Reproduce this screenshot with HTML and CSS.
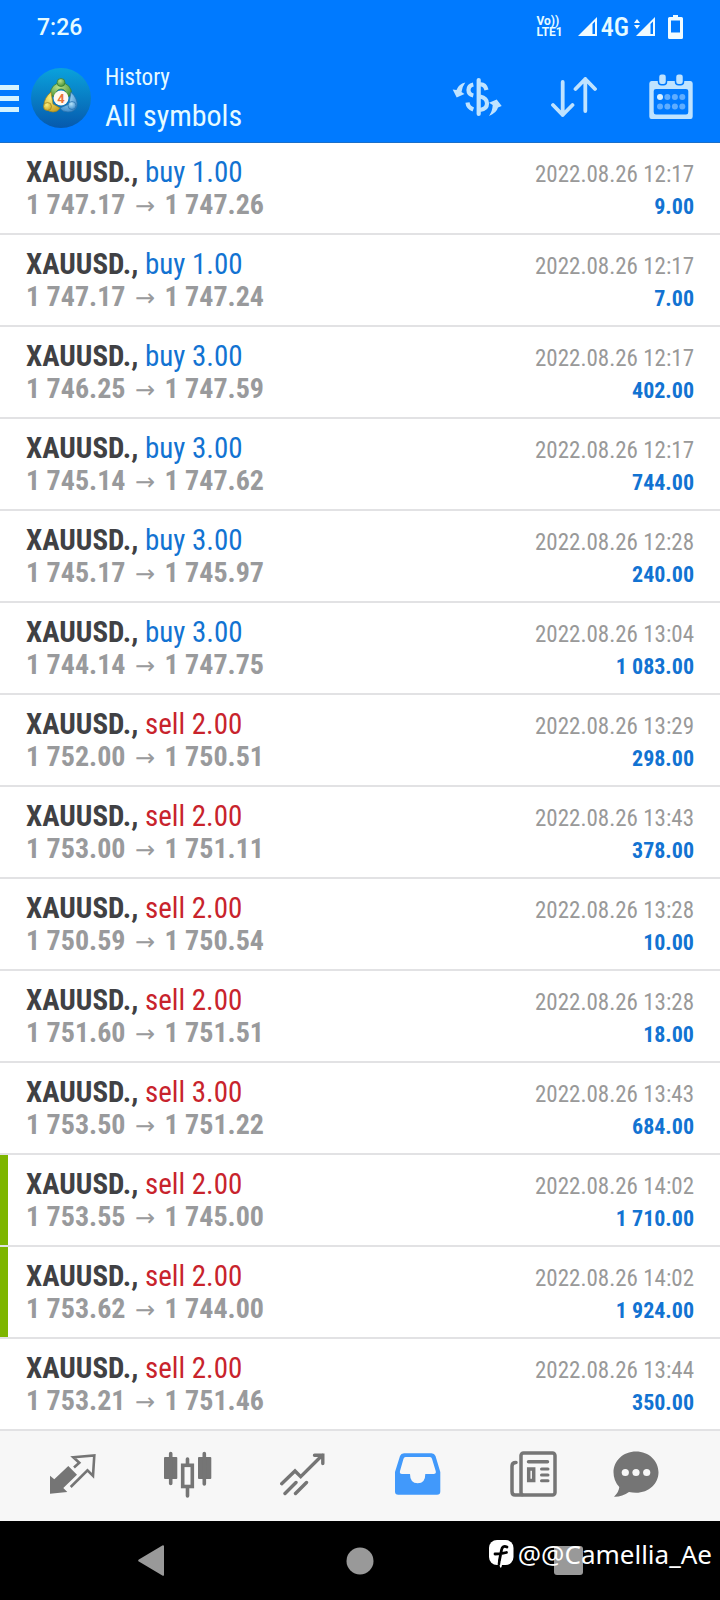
FILE: index.html
```html
<!DOCTYPE html>
<html lang="en">
<head>
<meta charset="utf-8">
<meta name="viewport" content="width=device-width, initial-scale=1">
<title>History</title>
<link rel="stylesheet" href="styles.css">
</head>
<body>
<header class="top">
  <div class="status">
    <span class="clock">7:26</span>
    <span class="volte"><span>Vo))</span><span>LTE1</span></span>
    <svg class="signal" width="20" height="20" viewBox="0 0 20 20"><path d="M0 19 19 0V19Z" fill="#f0fbff"/><path d="M14.500 7V17H17V4.500Z" fill="#007aff"/></svg>
    <span class="net">4G</span>
    <svg class="signal2" width="22" height="20" viewBox="0 0 22 20"><path d="M2 19 21 0V19Z" fill="#f0fbff"/><path d="M16.500 7V17H19V4.500Z" fill="#007aff"/><path d="M0 6 3 2 6 6ZM0 8H6L3 12Z" fill="#f0fbff"/></svg>
    <svg class="battery" width="15" height="24" viewBox="0 0 15 24"><path d="M5 0H10V2H13.500Q15 2 15 3.500V22.500Q15 24 13.500 24H1.500Q0 24 0 22.500V3.500Q0 2 1.500 2H5Z" fill="#f0fbff"/><path d="M3 5.500H12V17.500H3Z" fill="#007aff"/></svg>
  </div>
  <div class="appbar">
    <button class="menu" aria-label="Menu"><i></i><i></i><i></i></button>
    <svg class="logo" width="60" height="60" viewBox="0 0 60 60" role="img" aria-label="App logo">
      <defs>
        <linearGradient id="sky" x1="0" y1="0" x2="0" y2="1"><stop offset="0" stop-color="#0aa2dc"/><stop offset="1" stop-color="#0659ad"/></linearGradient>
        <radialGradient id="gr" cx=".4" cy=".3" r=".8"><stop offset="0" stop-color="#b9e08a"/><stop offset="1" stop-color="#3c8a2c"/></radialGradient>
        <radialGradient id="ye" cx=".4" cy=".3" r=".8"><stop offset="0" stop-color="#fbf07c"/><stop offset="1" stop-color="#c49a1c"/></radialGradient>
        <radialGradient id="bl" cx=".4" cy=".3" r=".8"><stop offset="0" stop-color="#b5e4fa"/><stop offset="1" stop-color="#2f82c8"/></radialGradient>
      </defs>
      <circle cx="30" cy="30" r="30" fill="url(#sky)"/>
      <path d="M19 27Q20 15 30 15T41 27L36 29Q35 21 30 21T24 29Z" fill="url(#gr)" stroke="#2d7a35" stroke-width=".7"/>
      <path d="M20 24Q13 30 13 37Q14 43 22 44Q27 44 29 40L22 36Z" fill="url(#ye)" stroke="#9c8420" stroke-width=".7"/>
      <path d="M40 24Q47 31 46 38Q44 44 37 44Q31 44 29 40L38 36Z" fill="url(#bl)" stroke="#2870ab" stroke-width=".7"/>
      <circle cx="30" cy="14.500" r="4" fill="url(#gr)" stroke="#2d7a35" stroke-width=".7"/>
      <circle cx="16.500" cy="38.500" r="4" fill="url(#ye)" stroke="#9c8420" stroke-width=".7"/>
      <circle cx="41" cy="37.500" r="4" fill="url(#bl)" stroke="#2870ab" stroke-width=".7"/>
      <circle cx="30" cy="30" r="7.500" fill="#fff8f0"/>
      <text x="30" y="34.500" text-anchor="middle" class="logo-num">4</text>
    </svg>
    <div class="titles">
      <span class="sub">History</span>
      <h1>All symbols</h1>
    </div>
    <button class="action" aria-label="Currency">
      <svg width="50" height="42" viewBox="0 0 50 42" fill="none" stroke="#bfe3ff" stroke-width="4.200">
        <path d="M.7 13.500 4.500 14Q6.500 8 13.300 6.500Q10 11 9.500 16L12.500 18 4.700 21.500ZM49.700 30 44.700 23.500 37 26.700 40.700 29Q40.500 35 37 40Q44.500 37 46 31.500Z" fill="#bfe3ff" stroke="none"/>
        <path d="M26.700 4V38" stroke-linecap="round"/>
        <path d="M21.300 8.500Q16.500 9.500 16.500 14T21.300 19.500M15.500 26.500Q16 31.500 21.300 33.500M28 8.500Q33 8 34.500 14M28 20.500Q35 22 35 27.500T28 34"/>
      </svg>
    </button>
    <button class="action" aria-label="Sort">
      <svg width="46" height="42" viewBox="0 0 46 42" fill="none" stroke="#bfe3ff" stroke-width="3.800" stroke-linecap="round" stroke-linejoin="round"><path d="M11.700 6V39M2 29 11.700 39 21.500 29M34.300 35V3M24.500 13 34.300 3 44 13"/></svg>
    </button>
    <button class="action" aria-label="Date range">
      <svg width="46" height="48" viewBox="0 0 46 48">
        <path fill="#bfe3ff" fill-rule="evenodd" d="M3.500 8H42.500Q44.700 8 44.700 10.500V43.500Q44.700 46 42.500 46H3.500Q1.300 46 1.300 43.500V10.500Q1.300 8 3.500 8ZM8 16Q5.700 16 5.700 18V39Q5.700 41.500 8 41.500H38Q40.300 41.500 40.300 39V18Q40.300 16 38 16Z"/>
        <g fill="#bfe3ff" stroke="#007aff" stroke-width="1.500"><rect x="10.500" y=".8" width="8" height="11" rx="3"/><rect x="27.500" y=".8" width="8" height="11" rx="3"/></g>
        <circle cx="12" cy="24" r="3" fill="#d9f0ff"/>
        <g fill="#5fadff"><circle cx="19.400" cy="24" r="3"/><circle cx="26.900" cy="24" r="3"/><circle cx="34.300" cy="24" r="3"/><circle cx="12" cy="33.500" r="3"/><circle cx="19.400" cy="33.500" r="3"/><circle cx="26.900" cy="33.500" r="3"/><circle cx="34.300" cy="33.500" r="3"/></g>
      </svg>
    </button>
  </div>
</header>

<main>
  <ul class="deals">
    <li class="deal"><span class="name"><b>XAUUSD.,</b> <span class="buy">buy 1.00</span></span><time>2022.08.26 12:17</time><span class="price">1 747.17 <i>→</i> 1 747.26</span><span class="profit">9.00</span></li>
    <li class="deal"><span class="name"><b>XAUUSD.,</b> <span class="buy">buy 1.00</span></span><time>2022.08.26 12:17</time><span class="price">1 747.17 <i>→</i> 1 747.24</span><span class="profit">7.00</span></li>
    <li class="deal"><span class="name"><b>XAUUSD.,</b> <span class="buy">buy 3.00</span></span><time>2022.08.26 12:17</time><span class="price">1 746.25 <i>→</i> 1 747.59</span><span class="profit">402.00</span></li>
    <li class="deal"><span class="name"><b>XAUUSD.,</b> <span class="buy">buy 3.00</span></span><time>2022.08.26 12:17</time><span class="price">1 745.14 <i>→</i> 1 747.62</span><span class="profit">744.00</span></li>
    <li class="deal"><span class="name"><b>XAUUSD.,</b> <span class="buy">buy 3.00</span></span><time>2022.08.26 12:28</time><span class="price">1 745.17 <i>→</i> 1 745.97</span><span class="profit">240.00</span></li>
    <li class="deal"><span class="name"><b>XAUUSD.,</b> <span class="buy">buy 3.00</span></span><time>2022.08.26 13:04</time><span class="price">1 744.14 <i>→</i> 1 747.75</span><span class="profit">1 083.00</span></li>
    <li class="deal"><span class="name"><b>XAUUSD.,</b> <span class="sell">sell 2.00</span></span><time>2022.08.26 13:29</time><span class="price">1 752.00 <i>→</i> 1 750.51</span><span class="profit">298.00</span></li>
    <li class="deal"><span class="name"><b>XAUUSD.,</b> <span class="sell">sell 2.00</span></span><time>2022.08.26 13:43</time><span class="price">1 753.00 <i>→</i> 1 751.11</span><span class="profit">378.00</span></li>
    <li class="deal"><span class="name"><b>XAUUSD.,</b> <span class="sell">sell 2.00</span></span><time>2022.08.26 13:28</time><span class="price">1 750.59 <i>→</i> 1 750.54</span><span class="profit">10.00</span></li>
    <li class="deal"><span class="name"><b>XAUUSD.,</b> <span class="sell">sell 2.00</span></span><time>2022.08.26 13:28</time><span class="price">1 751.60 <i>→</i> 1 751.51</span><span class="profit">18.00</span></li>
    <li class="deal"><span class="name"><b>XAUUSD.,</b> <span class="sell">sell 3.00</span></span><time>2022.08.26 13:43</time><span class="price">1 753.50 <i>→</i> 1 751.22</span><span class="profit">684.00</span></li>
    <li class="deal take"><span class="name"><b>XAUUSD.,</b> <span class="sell">sell 2.00</span></span><time>2022.08.26 14:02</time><span class="price">1 753.55 <i>→</i> 1 745.00</span><span class="profit">1 710.00</span></li>
    <li class="deal take"><span class="name"><b>XAUUSD.,</b> <span class="sell">sell 2.00</span></span><time>2022.08.26 14:02</time><span class="price">1 753.62 <i>→</i> 1 744.00</span><span class="profit">1 924.00</span></li>
    <li class="deal"><span class="name"><b>XAUUSD.,</b> <span class="sell">sell 2.00</span></span><time>2022.08.26 13:44</time><span class="price">1 753.21 <i>→</i> 1 751.46</span><span class="profit">350.00</span></li>
  </ul>
</main>

<nav class="tabs">
  <button aria-label="Quotes"><svg width="50" height="42" viewBox="0 0 50 42"><path d="M2 22.700 6.300 26.300 20.300 13 29 21.700 15.300 35 19.300 39 2 40.700Z" fill="#757575"/><path d="M26 14.500 31.300 9.800 25.300 4.300 46.300 2.500 45 22.800 39.500 17.300 22.700 34" fill="none" stroke="#757575" stroke-width="2.600"/></svg></button>
  <button aria-label="Charts"><svg width="49" height="47" viewBox="0 0 49 47"><g fill="#757575"><rect x="1" y="6" width="13.300" height="22" rx="1"/><rect x="35" y="6" width="13.300" height="22" rx="1"/></g><g fill="none" stroke="#757575" stroke-width="3.600" stroke-linecap="round"><path d="M7.700 2.500V32.500M41.300 2.500V33M24.500 8V14M24.500 37V45"/><rect x="19.700" y="14.300" width="9.600" height="21.200"/></g></svg></button>
  <button aria-label="Trade"><svg width="46" height="43" viewBox="0 0 46 43" fill="none" stroke="#757575" stroke-width="3.400" stroke-linecap="round"><path d="M1.700 30.700 15 18 20.700 23.700 42.500 2M34.500 2.200H42.800V10.500M5 40.500 16 29.500M15.500 40.500 26.500 29.500"/></svg></button>
  <button aria-label="History"><svg width="48" height="44" viewBox="0 0 48 44"><path fill="#4199fb" fill-rule="evenodd" d="M10 1.300H37.500Q40.500 1.300 41.500 4L46.300 20V39.500Q46.300 42.700 43 42.700H4.300Q1 42.700 1 39.500V20L6 4Q7 1.300 10 1.300ZM11.500 5Q10 5 9.500 6.700L6 19Q5.300 22 8 22H16Q16 31.300 23.700 31.300T31.300 22H39.500Q42.500 22 41.700 19L38 6.700Q37.500 5 36 5Z"/></svg></button>
  <button aria-label="News"><svg width="48" height="48" viewBox="0 0 48 48" fill="none" stroke="#757575" stroke-width="3.500" stroke-linecap="round"><rect x="12" y="3" width="34" height="42" rx="2.500"/><path d="M7 12.500Q3 12.500 3 16V41.500Q3 45 6 45H13M19.500 11.700H38.500"/><path d="M32.500 19H39M32.500 25H39M32.500 30.700H39" stroke-width="3"/><rect x="19.700" y="19" width="5" height="11.500"/></svg></button>
  <button aria-label="Messages"><svg width="46" height="48" viewBox="0 0 46 48"><path d="M23 1.500C36 1.500 45.500 11 45.500 22.300S36 42.800 23 42.800Q19.500 42.800 16 42Q9 47 1 46.700Q6 42 6.300 37Q.5 31 .5 22.300C.5 11 10 1.500 23 1.500Z" fill="#757575"/><g fill="#f7f7f7"><circle cx="12.300" cy="22.500" r="3.600"/><circle cx="23" cy="22.500" r="3.600"/><circle cx="33.700" cy="22.500" r="3.600"/></g></svg></button>
</nav>

<footer class="system">
  <button aria-label="Back"><svg width="26" height="32" viewBox="0 0 26 32"><path d="M25 1.500 1.500 15.500 25 29.500Z" fill="#999" stroke="#999" stroke-width="2.500" stroke-linejoin="round"/></svg></button>
  <button aria-label="Home"><svg width="28" height="28" viewBox="0 0 28 28"><circle cx="14" cy="14" r="13.500" fill="#999"/></svg></button>
  <button aria-label="Recents"><svg width="29" height="29" viewBox="0 0 29 29"><rect width="29" height="29" rx="3" fill="#999"/></svg></button>
  <div class="credit">
    <svg width="25" height="28" viewBox="0 0 25 28"><rect width="24.500" height="25" rx="8" fill="#fff"/><path d="M18 7Q13.500 5 12.500 10L10.500 20M6 14Q12 14 17.500 12.500" fill="none" stroke="#000" stroke-width="2.800" stroke-linecap="round"/><path d="M9.500 21H14L12.500 27Q11.500 28.500 11 27Z" fill="#fff"/><path d="M10.500 20 9.800 25" stroke="#000" stroke-width="2.500"/></svg>
    <span>@@Camellia_Ae</span>
  </div>
</footer>
</body>
</html>
```
FILE: styles.css
```css
* { box-sizing: border-box; }
body {
  margin: 0;
  min-height: 100vh;
  display: flex;
  flex-direction: column;
  background: #fff;
  font-family: "Roboto Condensed", "Liberation Sans Narrow", Roboto, sans-serif;
}
button {
  display: flex;
  align-items: center;
  justify-content: center;
  padding: 0;
  border: 0;
  background: none;
}
svg { flex: none; display: block; }

.top { background: #007aff; color: #e6fbff; border-bottom: 1px solid #1b6fc9; }
.status {
  display: flex;
  align-items: center;
  height: 52px;
  padding: 2px 37px 0 37px;
  font-family: Roboto, sans-serif;
  font-weight: 500;
}
.clock { font-size: 23px; margin-right: auto; }
.volte {
  display: flex;
  flex-direction: column;
  margin-right: 15px;
  font-size: 12px;
  line-height: 11px;
  font-weight: 700;
}
.net {
  margin: 0 5px 0 3px;
  font-family: "Roboto Condensed", "Liberation Sans Narrow", Roboto, sans-serif;
  font-size: 26px;
}
.signal2 { margin-right: 12px; }

.appbar { display: flex; align-items: center; height: 90px; padding: 2px 1px 0 0; }
.menu { flex-direction: column; align-items: stretch; gap: 6px; width: 19px; margin-right: 12px; }
.menu i { height: 5px; background: #d4f3ff; }
.logo-num { font: 700 13px Roboto, sans-serif; fill: #e8743b; }
.titles { display: flex; flex-direction: column; margin: 0 auto 0 14px; }
.sub { font-size: 23px; line-height: 36px; }
.titles h1 { margin: 0; font-size: 30px; line-height: 40px; font-weight: 400; }
.action { width: 97px; height: 88px; padding-bottom: 2px; }

.deals { list-style: none; margin: 0; padding: 0; }
.deal {
  display: grid;
  grid-template-columns: 1fr auto;
  align-items: baseline;
  align-content: start;
  height: 92px;
  padding: 14px 26px 0;
  border-bottom: 2px solid #e2e2e4;
  font-size: 29px;
  line-height: 30px;
  white-space: nowrap;
}
.take { background: linear-gradient(#7db500, #7db500) left / 8px 100% no-repeat; }
.name b { color: #404144; }
.buy { color: #1273d2; }
.sell { color: #c8232c; }
.price { color: #999a9c; font-size: 28px; font-weight: 700; }
.price i { font: 400 24px/1 "DejaVu Sans", sans-serif; margin: 0 3px; }
.deal time { font-size: 23px; color: #999; text-align: right; }
.profit { font-size: 22px; font-weight: 700; color: #1273d2; text-align: right; }

.tabs { display: flex; height: 90px; padding: 0 38px 4px 15px; background: #f7f7f7; }
.tabs button { flex: 5; }
.tabs button:last-child { flex: 4; }

.system {
  position: relative;
  flex: 1;
  min-height: 79px;
  display: flex;
  justify-content: center;
  background: #000;
}
.system button { width: 29%; }
.credit {
  position: absolute;
  right: 8px;
  top: 19px;
  display: flex;
  align-items: center;
  gap: 4px;
  color: #fff;
  font: 400 26px/28px "Noto Sans", sans-serif;
}
```
